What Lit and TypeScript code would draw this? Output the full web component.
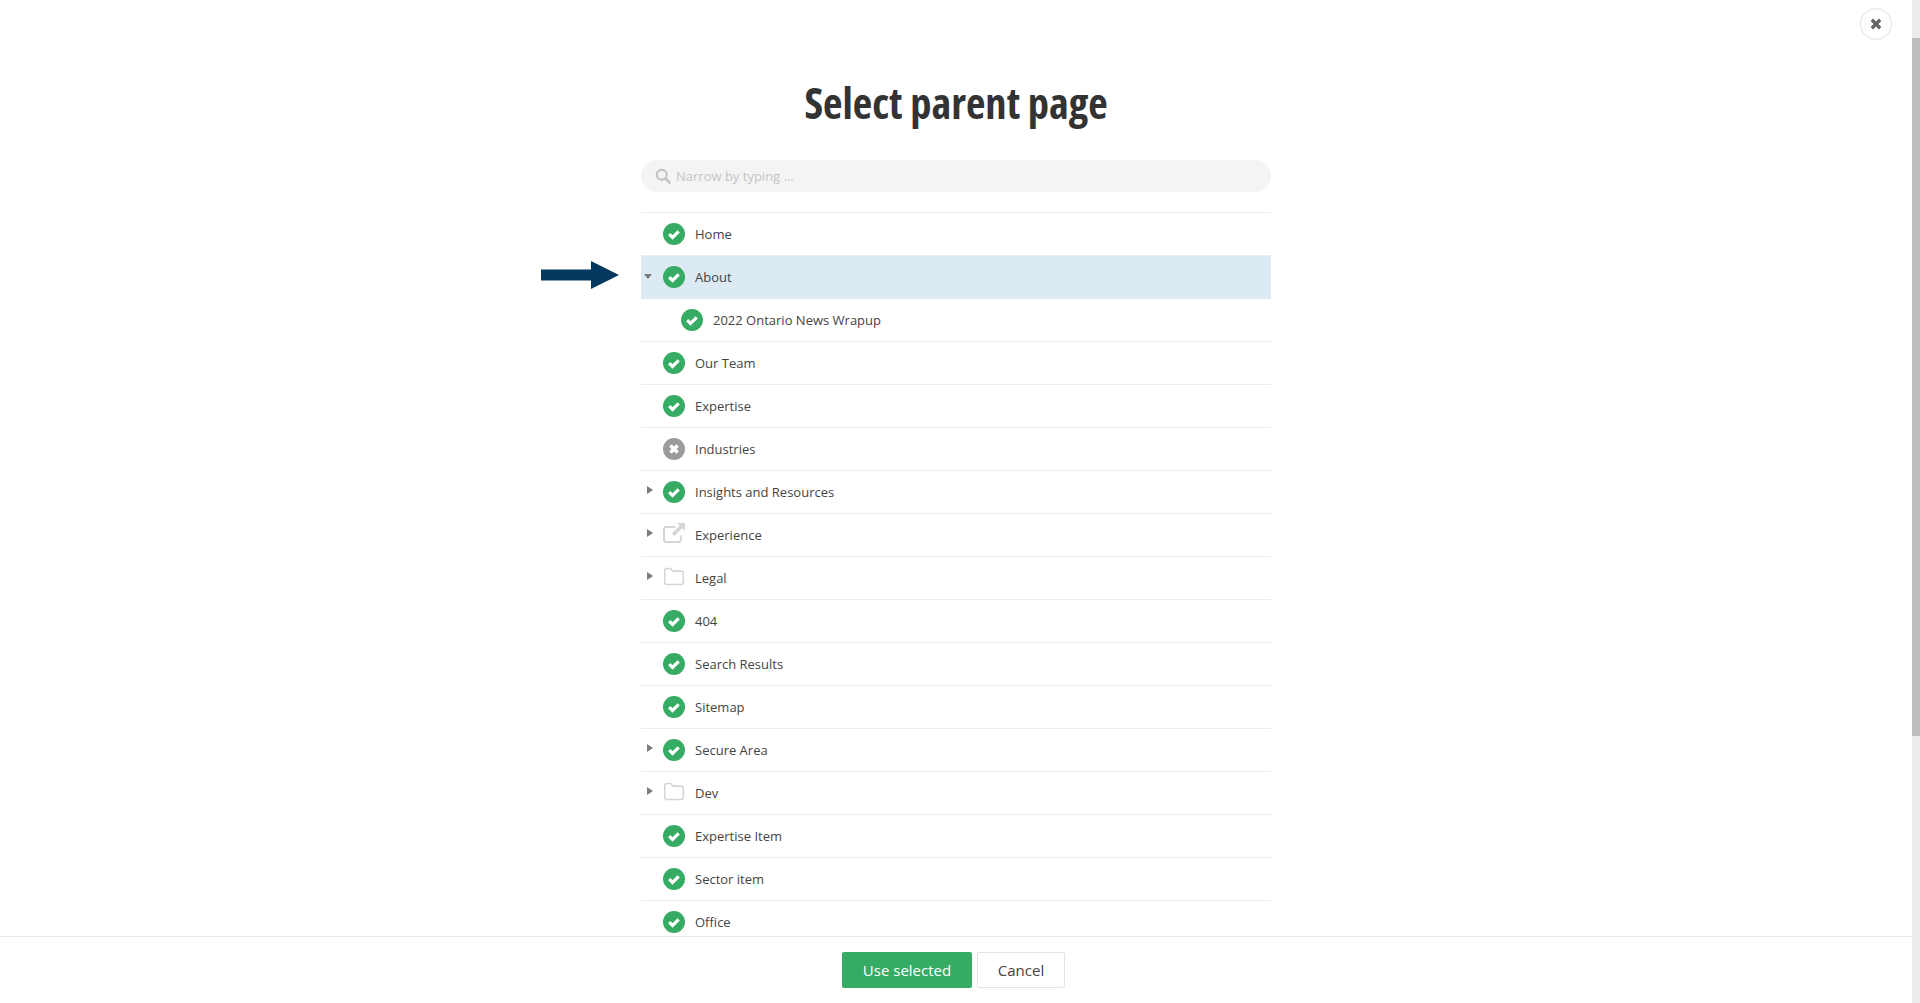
import { LitElement, html, css, svg } from "lit";
import { customElement } from "lit/decorators.js";

type Row = { label: string; icon: "ok" | "off" | "link" | "folder"; caret?: "right" | "down"; nested?: boolean; active?: boolean };

const rows: Row[] = [
  { label: "Home", icon: "ok" },
  { label: "About", icon: "ok", caret: "down", active: true },
  { label: "2022 Ontario News Wrapup", icon: "ok", nested: true },
  { label: "Our Team", icon: "ok" },
  { label: "Expertise", icon: "ok" },
  { label: "Industries", icon: "off" },
  { label: "Insights and Resources", icon: "ok", caret: "right" },
  { label: "Experience", icon: "link", caret: "right" },
  { label: "Legal", icon: "folder", caret: "right" },
  { label: "404", icon: "ok" },
  { label: "Search Results", icon: "ok" },
  { label: "Sitemap", icon: "ok" },
  { label: "Secure Area", icon: "ok", caret: "right" },
  { label: "Dev", icon: "folder", caret: "right" },
  { label: "Expertise Item", icon: "ok" },
  { label: "Sector item", icon: "ok" },
  { label: "Office", icon: "ok" },
];

const icons = {
  ok: svg`<circle cx="11" cy="11" r="11" fill="#36ab63"/><path d="M6.2 11.2l3.3 3.2 6.2-6" fill="none" stroke="#fff" stroke-width="3.2"/>`,
  off: svg`<circle cx="11" cy="11" r="11" fill="#9b9b9b"/><path d="M7.4 7.4l7.2 7.2M14.6 7.4l-7.2 7.2" fill="none" stroke="#fff" stroke-width="3.6"/>`,
  link: svg`<path d="M17.8 11.5v4.3a2.2 2.2 0 0 1-2.2 2.2H3.2A2.2 2.2 0 0 1 1 15.8V5.2A2.2 2.2 0 0 1 3.2 3h9.3" fill="none" stroke="#d6d6d6" stroke-width="2"/><path d="M14 -1H22V7l-2.8-2.8-7.7 7.7-2.6-2.6 7.9-7.5z" fill="#d6d6d6"/>`,
  folder: svg`<path d="M1.7 3.7A2.2 2.2 0 0 1 3.9 1.5h3.7l2.4 2.6h8.1a2.2 2.2 0 0 1 2.2 2.2v9a2.2 2.2 0 0 1-2.2 2.2H3.9a2.2 2.2 0 0 1-2.2-2.2z" fill="none" stroke="#d6d6d6" stroke-width="1.6"/>`,
};

@customElement("app-root")
export class AppRoot extends LitElement {
  static styles = css`
    :host {
      display: flex;
      height: 100vh;
      overflow: hidden;
      background: #fff;
      font-family: "Open Sans", sans-serif;
      font-size: 13px;
      color: #444;
      position: relative;
    }
    .main {
      flex: 1;
      min-width: 0;
      display: flex;
      flex-direction: column;
      position: relative;
    }
    .content {
      flex: 1;
      min-height: 0;
      overflow: hidden;
      display: flex;
      flex-direction: column;
      align-items: center;
    }
    h1 {
      flex: none;
      margin: 0;
      padding-top: 77px;
      height: 83px;
      box-sizing: content-box;
      font-size: 42.5px;
      line-height: 52px;
      font-weight: 700;
      font-stretch: 75%;
      color: #333;
      white-space: nowrap;
    }
    .col {
      width: 630px;
      flex: none;
    }
    .search {
      height: 32px;
      border-radius: 16px;
      background: #f4f4f4;
      display: flex;
      align-items: center;
      gap: 5px;
      padding-left: 14px;
      color: #c4c4c4;
      margin-bottom: 20px;
    }
    .search svg { width: 16px; height: 16px; display: block; }
    .list { border-top: 1px solid #ececec; }
    .row {
      height: 43px;
      box-sizing: border-box;
      border-bottom: 1px solid #ececec;
      display: flex;
      align-items: center;
      padding-left: 22px;
      position: relative;
    }
    .row.nested { padding-left: 40px; }
    .row.active { background: #dbeaf3; border-bottom-color: #dbeaf3; }
    .icon { width: 22px; height: 22px; flex: none; margin-right: 10px; margin-top: -1px; display: block; overflow: visible; }
    .label { white-space: nowrap; }
    .caret { position: absolute; width: 0; height: 0; border-style: solid; border-color: transparent; }
    .caret.right { left: 6px; top: 15px; border-width: 4.5px 0 4.5px 6px; border-left-color: #7b7b7b; }
    .caret.down { left: 3px; top: 18px; border-width: 5px 4.5px 0; border-top-color: #7b7b7b; }
    .footer {
      flex: none;
      height: 67px;
      box-sizing: border-box;
      border-top: 1px solid #e8e8e8;
      background: #fff;
      display: flex;
      justify-content: center;
      align-items: flex-start;
      gap: 5px;
      padding: 15px 5px 0 0;
    }
    button {
      font: inherit;
      font-size: 15px;
      height: 36px;
      border-radius: 2px;
      padding: 0;
      cursor: pointer;
    }
    .primary { width: 130px; background: #36ab63; border: none; color: #fff; font-weight: 500; }
    .secondary { width: 88px; background: #fff; border: 1px solid #e3e3e3; color: #444; }
    .scrollbar { flex: none; width: 8px; background: #ececec; padding-top: 38px; box-sizing: border-box; }
    .thumb { height: 698px; background: #bdbdbd; }
    .close {
      position: absolute;
      top: 8px;
      right: 20px;
      width: 32px;
      height: 32px;
      box-sizing: border-box;
      border-radius: 50%;
      border: 1px solid #e3e3e3;
      display: flex;
      align-items: center;
      justify-content: center;
    }
    .close svg { width: 12px; height: 12px; display: block; }
    .arrow { position: absolute; left: 541px; top: 261px; width: 78px; height: 28px; display: block; }
  `;

  render() {
    return html`
      <div class="main">
        <div class="content">
          <h1>Select parent page</h1>
          <div class="col">
            <div class="search">
              <svg viewBox="0 0 16 16"><circle cx="6.8" cy="6.8" r="5" fill="none" stroke="#c4c4c4" stroke-width="2.2"/><path d="M10.5 10.5l4 4" stroke="#c4c4c4" stroke-width="2.6" stroke-linecap="round"/></svg>
              <span>Narrow by typing ...</span>
            </div>
            <div class="list">
              ${rows.map(
                (r) => html`<div class="row ${r.nested ? "nested" : ""} ${r.active ? "active" : ""}">
                  ${r.caret ? html`<span class="caret ${r.caret}"></span>` : ""}
                  <svg class="icon" viewBox="0 0 22 22">${icons[r.icon]}</svg>
                  <span class="label">${r.label}</span>
                </div>`
              )}
            </div>
          </div>
        </div>
        <div class="footer">
          <button class="primary">Use selected</button>
          <button class="secondary">Cancel</button>
        </div>
        <svg class="arrow" viewBox="0 0 78 28"><path d="M0 8.5H50V0L78 14 50 28V19.5H0z" fill="#03395e"/></svg>
        <div class="close">
          <svg viewBox="0 0 12 12"><path d="M1.8 1.8l8.4 8.4M10.2 1.8l-8.4 8.4" stroke="#666" stroke-width="3.4" fill="none"/></svg>
        </div>
      </div>
      <div class="scrollbar"><div class="thumb"></div></div>
    `;
  }
}
